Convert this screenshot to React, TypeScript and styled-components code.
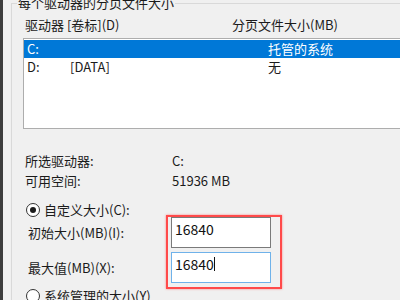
import styled, { createGlobalStyle } from "styled-components";

const GlobalStyle = createGlobalStyle`
  html, body {
    margin: 0;
    padding: 0;
    background: #f0f0f0;
  }
  body {
    font-family: "Noto Sans CJK SC", "Noto Sans", sans-serif;
    font-size: 13px;
    color: #1b1b1b;
  }
`;

const FONT = `"Noto Sans CJK SC", "Noto Sans", sans-serif`;

const Page = styled.div`
  display: flex;
  width: 400px;
  height: 300px;
  overflow: hidden;
  background: #f0f0f0;
`;

const Strip = styled.div`
  width: 3px;
  flex: none;
  background: #3d3d3d;
`;

const Main = styled.div`
  flex: 1;
  padding-left: 8px;
  min-width: 0;
`;

const GroupBox = styled.fieldset`
  margin: -4px -40px 0 0;
  padding: 0;
  border: 1px solid #d9d9d9;
  border-right: none;
  border-bottom: none;
  min-width: 0;
`;

const Legend = styled.legend`
  margin-left: 5px;
  padding: 0 1px;
  font-family: ${FONT};
  font-size: 13px;
  line-height: 14px;
  color: #1b1b1b;
`;

const HeaderRow = styled.div`
  display: flex;
  height: 18px;
  line-height: 18px;
  margin-top: 6px;
  padding-left: 13px;
  white-space: nowrap;
`;

const HeaderCell = styled.div<{ $w?: number }>`
  flex: ${({ $w }) => ($w ? `0 0 ${$w}px` : "1")};
`;

const ListBox = styled.div`
  margin: 4px 0 0 11px;
  height: 88px;
  background: #fff;
  border: 1px solid #adadad;
  border-right: none;
  padding-top: 1px;
`;

const ListRow = styled.div<{ $selected?: boolean }>`
  display: flex;
  height: 18px;
  line-height: 17px;
  padding-left: 3px;
  white-space: nowrap;
  background: ${({ $selected }) => ($selected ? "#0078d7" : "transparent")};
  color: ${({ $selected }) => ($selected ? "#fff" : "#1b1b1b")};
`;

const Cell = styled.div<{ $w?: number }>`
  flex: ${({ $w }) => ($w ? `0 0 ${$w}px` : "1")};
`;

const InfoList = styled.div`
  margin-top: 22px;
  padding-left: 13px;
`;

const InfoRow = styled.div`
  display: flex;
  height: 20px;
  line-height: 20px;
`;

const InfoLabel = styled.div`
  flex: 0 0 147px;
`;

const RadioRow = styled.div<{ $top: number }>`
  display: flex;
  align-items: center;
  gap: 4px;
  height: 14px;
  margin-top: ${({ $top }) => $top}px;
  padding-left: 14px;
  line-height: 14px;
  white-space: nowrap;
`;

const RadioCircle = styled.span<{ $checked?: boolean }>`
  width: 12px;
  height: 12px;
  border: 1px solid #333;
  border-radius: 50%;
  background: #fff;
  display: flex;
  align-items: center;
  justify-content: center;
  flex: none;
  &::after {
    content: "";
    display: ${({ $checked }) => ($checked ? "block" : "none")};
    width: 6px;
    height: 6px;
    border-radius: 50%;
    background: #1b1b1b;
  }
`;

const FormBlock = styled.div`
  display: flex;
  margin-top: -2px;
  padding-left: 16px;
`;

const Labels = styled.div`
  flex: 0 0 138px;
  display: flex;
  flex-direction: column;
  padding-top: 2px;
`;

const FieldLabel = styled.div<{ $h: number }>`
  height: ${({ $h }) => $h}px;
  display: flex;
  align-items: center;
  white-space: nowrap;
`;

const Highlight = styled.div`
  display: flex;
  flex-direction: column;
  gap: 4px;
  width: 112px;
  padding: 0 9px 4px 3px;
  box-sizing: border-box;
  width: 116px;
  border: 2px solid #ff4a4a;
  box-shadow: 0 0 2px rgba(255, 60, 60, 0.6);
`;

const Input = styled.div<{ $focused?: boolean }>`
  height: 31px;
  box-sizing: border-box;
  border: 1px solid ${({ $focused }) => ($focused ? "#6fb2ea" : "#7a7a7a")};
  background: #fff;
  padding: 2px 0 0 3px;
  font-family: ${FONT};
  font-size: 14px;
  line-height: 18px;
  color: #111;
  display: flex;
  align-items: flex-start;
`;

const Caret = styled.span`
  display: inline-block;
  width: 1px;
  height: 14px;
  margin-top: 2px;
  background: #111;
`;

export default function App() {
  return (
    <>
      <GlobalStyle />
      <Page>
        <Strip />
        <Main>
          <GroupBox>
            <Legend>每个驱动器的分页文件大小</Legend>
            <HeaderRow>
              <HeaderCell $w={207}>驱动器 [卷标](D)</HeaderCell>
              <HeaderCell>分页文件大小(MB)</HeaderCell>
            </HeaderRow>
            <ListBox>
              <ListRow $selected>
                <Cell $w={43}>C:</Cell>
                <Cell $w={198}></Cell>
                <Cell>托管的系统</Cell>
              </ListRow>
              <ListRow>
                <Cell $w={43}>D:</Cell>
                <Cell $w={198}>[DATA]</Cell>
                <Cell>无</Cell>
              </ListRow>
            </ListBox>
            <InfoList>
              <InfoRow>
                <InfoLabel>所选驱动器:</InfoLabel>
                <div>C:</div>
              </InfoRow>
              <InfoRow>
                <InfoLabel>可用空间:</InfoLabel>
                <div>51936 MB</div>
              </InfoRow>
            </InfoList>
            <RadioRow $top={12}>
              <RadioCircle $checked />
              <span>自定义大小(C):</span>
            </RadioRow>
            <FormBlock>
              <Labels>
                <FieldLabel $h={31}>初始大小(MB)(I):</FieldLabel>
                <FieldLabel $h={4} />
                <FieldLabel $h={31}>最大值(MB)(X):</FieldLabel>
              </Labels>
              <Highlight>
                <Input>16840</Input>
                <Input $focused>
                  16840
                  <Caret />
                </Input>
              </Highlight>
            </FormBlock>
            <RadioRow $top={0}>
              <RadioCircle />
              <span>系统管理的大小(Y)</span>
            </RadioRow>
          </GroupBox>
        </Main>
      </Page>
    </>
  );
}
